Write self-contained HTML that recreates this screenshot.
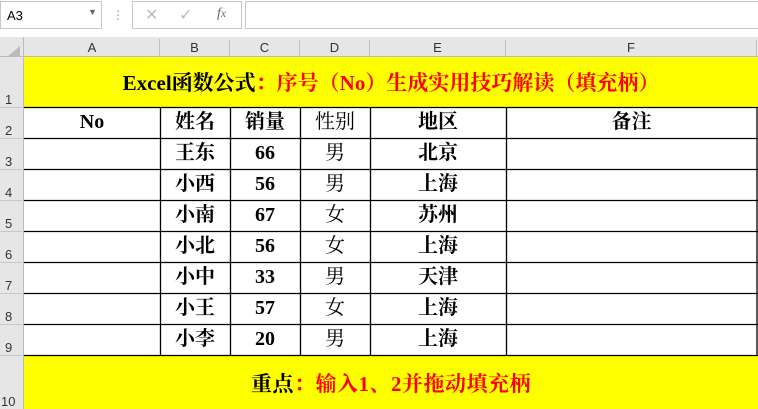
<!DOCTYPE html><html><head><style>
body{margin:0;width:758px;height:409px;background:#e6e6e6;position:relative;overflow:hidden;font-family:"Liberation Serif","Noto Serif CJK SC",serif}
.a{position:absolute;box-sizing:border-box}
.hd{font-family:"Liberation Sans",sans-serif;font-size:13px;color:#333;text-align:center}
.c{position:absolute;font-weight:bold;font-size:20px;text-align:center;color:#000}
.r{color:#f00}
</style></head><body>
<div class="a" style="left:0;top:0;width:758px;height:37px;background:#fff"></div>
<div class="a" style="left:0;top:1px;width:102px;height:28px;border:1px solid #c6c6c6;background:#fff;font-family:'Liberation Sans',sans-serif;font-size:13px;padding:6px 0 0 6px">A3<span style="position:absolute;left:87px;top:5px;font-size:9px;color:#666">▼</span></div>
<div class="a" style="left:112px;top:8px;color:#999;font-size:12px">⋮</div>
<div class="a" style="left:132px;top:1px;width:110px;height:28px;border:1px solid #c6c6c6;background:#fff;color:#bbb;font-family:'Liberation Sans',sans-serif;font-size:16px"><span style="position:absolute;left:12px;top:3px">✕</span><span style="position:absolute;left:46px;top:3px">✓</span><span style="position:absolute;left:84px;top:4px;color:#666;font-style:italic;font-family:'Liberation Serif';font-size:14px">f<small>x</small></span></div>
<div class="a" style="left:245px;top:1px;width:513px;height:28px;border:1px solid #c6c6c6;border-right:none;background:#fff"></div>
<div class="a" style="left:0;top:37px;width:758px;height:20px;background:#e6e6e6;border-bottom:1px solid #bbb"></div>
<div class="a" style="left:24px;top:39px;width:136px;height:18px;border-right:1px solid #c0c0c0" ></div>
<div class="a hd" style="left:24px;top:40px;width:136px">A</div>
<div class="a hd" style="left:160px;top:40px;width:70px;border-right:1px solid #c0c0c0;height:17px">B</div>
<div class="a hd" style="left:230px;top:40px;width:70px;border-right:1px solid #c0c0c0;height:17px">C</div>
<div class="a hd" style="left:300px;top:40px;width:70px;border-right:1px solid #c0c0c0;height:17px">D</div>
<div class="a hd" style="left:370px;top:40px;width:136px;border-right:1px solid #c0c0c0;height:17px">E</div>
<div class="a hd" style="left:506px;top:40px;width:251px;border-right:1px solid #c0c0c0;height:17px">F</div>
<div class="a" style="left:8px;top:46px;width:0;height:0;border-left:12px solid transparent;border-bottom:10px solid #bbb"></div>
<div class="a" style="left:24px;top:57px;width:734px;height:352px;background:#fff"></div>
<div class="a" style="left:24px;top:57px;width:734px;height:50px;background:#ff0"></div>
<div class="a" style="left:24px;top:355px;width:734px;height:54px;background:#ff0"></div>
<div class="a" style="left:23px;top:37px;width:1px;height:372px;background:#bbb"></div>
<svg class="a" style="left:0;top:0" width="758" height="409">
<g stroke="#000" stroke-width="1.3">
<line x1="24" y1="107.5" x2="758" y2="107.5"/><line x1="24" y1="355.5" x2="758" y2="355.5"/>
<line x1="24" y1="138.5" x2="758" y2="138.5"/><line x1="24" y1="169.5" x2="758" y2="169.5"/><line x1="24" y1="200.5" x2="758" y2="200.5"/><line x1="24" y1="231.5" x2="758" y2="231.5"/><line x1="24" y1="262.5" x2="758" y2="262.5"/><line x1="24" y1="293.5" x2="758" y2="293.5"/><line x1="24" y1="324.5" x2="758" y2="324.5"/>
<line x1="160.5" y1="107" x2="160.5" y2="355"/><line x1="230.5" y1="107" x2="230.5" y2="355"/><line x1="300.5" y1="107" x2="300.5" y2="355"/><line x1="370.5" y1="107" x2="370.5" y2="355"/><line x1="506.5" y1="107" x2="506.5" y2="355"/><line x1="757" y1="107" x2="757" y2="355"/>
</g>
<g stroke="#c8c8c8"><line x1="0" y1="107.5" x2="23" y2="107.5"/><line x1="0" y1="138.5" x2="23" y2="138.5"/><line x1="0" y1="169.5" x2="23" y2="169.5"/><line x1="0" y1="200.5" x2="23" y2="200.5"/><line x1="0" y1="231.5" x2="23" y2="231.5"/><line x1="0" y1="262.5" x2="23" y2="262.5"/><line x1="0" y1="293.5" x2="23" y2="293.5"/><line x1="0" y1="324.5" x2="23" y2="324.5"/><line x1="0" y1="355.5" x2="23" y2="355.5"/></g>
<g font-family="Liberation Sans" font-size="13" fill="#333"><text x="5" y="104">1</text><text x="5" y="135">2</text><text x="5" y="166">3</text><text x="5" y="197">4</text><text x="5" y="228">5</text><text x="5" y="259">6</text><text x="5" y="290">7</text><text x="5" y="321">8</text><text x="5" y="352">9</text><text x="1" y="406">10</text></g>
</svg>
<div class="c" style="left:24px;top:67px;width:734px;font-size:21px;letter-spacing:0">Excel函数公式<span class="r">：序号（No）生成实用技巧解读（填充柄）</span></div>
<div class="c" style="left:24px;top:368px;width:734px;font-size:21px;letter-spacing:0.5px">重点<span class="r">：输入1、2并拖动填充柄</span></div>
<div class="c" style="left:24px;top:107px;width:136px;line-height:31px">No</div>
<div class="c" style="left:506px;top:107px;width:251px;line-height:31px">备注</div>
<div class="c" style="left:160px;top:107px;width:70px;line-height:31px">姓名<br>王东<br>小西<br>小南<br>小北<br>小中<br>小王<br>小李</div>
<div class="c" style="left:230px;top:107px;width:70px;line-height:31px">销量<br>66<br>56<br>67<br>56<br>33<br>57<br>20</div>
<div class="c" style="left:300px;top:107px;width:70px;line-height:31px;font-weight:normal">性别<br>男<br>男<br>女<br>女<br>男<br>女<br>男</div>
<div class="c" style="left:370px;top:107px;width:136px;line-height:31px">地区<br>北京<br>上海<br>苏州<br>上海<br>天津<br>上海<br>上海</div>
</body></html>
